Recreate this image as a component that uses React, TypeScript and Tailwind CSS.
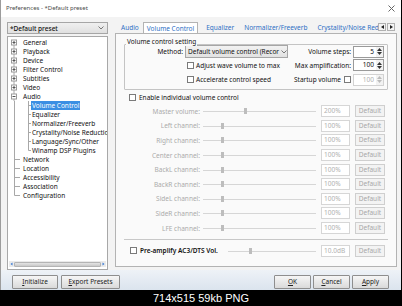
import React from "react";

const LINE = "#a8a8a8";

function ExpandBox({ open }: { open?: boolean }) {
  return (
    <g>
      <rect x="3.5" y="2" width="5" height="5" fill="#fff" stroke="#9a9a9a" strokeWidth="1" />
      <line x1="4.5" y1="4.5" x2="7.5" y2="4.5" stroke="#555" strokeWidth="1" />
      {!open && <line x1="6" y1="3" x2="6" y2="6" stroke="#555" strokeWidth="1" />}
    </g>
  );
}

type Row = { label: string; kind: "box" | "boxopen" | "leaf" | "child"; first?: boolean; last?: boolean; sel?: boolean };

const rows: Row[] = [
  { label: "General", kind: "box", first: true },
  { label: "Playback", kind: "box" },
  { label: "Device", kind: "box" },
  { label: "Filter Control", kind: "box" },
  { label: "Subtitles", kind: "box" },
  { label: "Video", kind: "box" },
  { label: "Audio", kind: "boxopen" },
  { label: "Volume Control", kind: "child", sel: true },
  { label: "Equalizer", kind: "child" },
  { label: "Normalizer/Freeverb", kind: "child" },
  { label: "Crystality/Noise Reduction", kind: "child" },
  { label: "Language/Sync/Other", kind: "child" },
  { label: "Winamp DSP Plugins", kind: "child", last: true },
  { label: "Network", kind: "leaf" },
  { label: "Location", kind: "leaf" },
  { label: "Accessibility", kind: "leaf" },
  { label: "Association", kind: "leaf" },
  { label: "Configuration", kind: "leaf", last: true },
];

function TreeRow({ r }: { r: Row }) {
  const isChild = r.kind === "child";
  const w = isChild ? 23 : 14;
  return (
    <div className="flex h-[9px] items-center whitespace-nowrap">
      <svg width={w} height="9" className="shrink-0">
        {r.kind === "box" || r.kind === "boxopen" ? (
          <>
            {!r.first && <line x1="6" y1="0" x2="6" y2="2" stroke={LINE} />}
            <line x1="6" y1="7" x2="6" y2="9" stroke={LINE} />
            <ExpandBox open={r.kind === "boxopen"} />
          </>
        ) : r.kind === "leaf" ? (
          <>
            <line x1="6.5" y1="0" x2="6.5" y2={r.last ? 4.5 : 9} stroke={LINE} />
            <line x1="6.5" y1="4.5" x2="12" y2="4.5" stroke={LINE} />
          </>
        ) : (
          <>
            <line x1="6.5" y1="0" x2="6.5" y2="9" stroke={LINE} />
            <line x1="20.5" y1="0" x2="20.5" y2={r.last ? 4.5 : 9} stroke={LINE} />
            <line x1="20.5" y1="4.5" x2="23" y2="4.5" stroke={LINE} />
          </>
        )}
      </svg>
      <span
        className={
          r.sel
            ? "bg-[#3b8fe3] text-white px-[1px] leading-[9px]"
            : "text-[#111] px-[1px] leading-[9px]"
        }
      >
        {r.label}
      </span>
    </div>
  );
}

function Check() {
  return <div className="w-[7px] h-[7px] bg-white border border-[#7a7a7a] shrink-0" />;
}

function Spin({ value, disabled }: { value: string; disabled?: boolean }) {
  return (
    <div
      className={
        "flex h-[12px] w-[31px] border bg-white " +
        (disabled ? "border-[#d2d2d2] text-[#b0b0b0]" : "border-[#9a9a9a] text-[#111]")
      }
    >
      <div className="flex-1 text-right pr-[2px] leading-[10px]">{value}</div>
      <div className="w-[7px] flex flex-col items-center justify-center gap-[1px] bg-[#f2f2f2]">
        <svg width="5" height="3"><polygon points="2.5,0 5,3 0,3" fill={disabled ? "#bbb" : "#333"} /></svg>
        <svg width="5" height="3"><polygon points="0,0 5,0 2.5,3" fill={disabled ? "#bbb" : "#333"} /></svg>
      </div>
    </div>
  );
}

function Slider({ width, pos }: { width: number; pos: number }) {
  return (
    <div className="relative h-[10px] shrink-0" style={{ width }}>
      <div className="absolute left-0 right-0 top-[5px] h-[1px] bg-[#d6d6d6]" />
      <div className="absolute top-[2px] w-[3px] h-[6px] bg-[#bdbdbd]" style={{ left: pos }} />
    </div>
  );
}

function ValueBox({ v }: { v: string }) {
  return (
    <div className="ml-[5px] w-[29px] h-[12px] border border-[#d6d6d6] bg-white text-[#b0b0b0] pl-[2px] leading-[10px] shrink-0">
      {v}
    </div>
  );
}

function DefBtn() {
  return (
    <div className="ml-[5px] w-[30px] h-[12px] border border-[#cfcfcf] bg-[#f3f3f3] text-[#a8a8a8] flex items-center justify-center leading-[10px] shrink-0">
      Default
    </div>
  );
}

const channels: [string, string, number][] = [
  ["Master volume:", "200%", 41],
  ["Left channel:", "100%", 18],
  ["Right channel:", "100%", 18],
  ["Center channel:", "100%", 18],
  ["BackL channel:", "100%", 18],
  ["BackR channel:", "100%", 18],
  ["SideL channel:", "100%", 18],
  ["SideR channel:", "100%", 18],
  ["LFE channel:", "100%", 18],
];

function Btn({ u, rest, w }: { u: string; rest: string; w: string }) {
  return (
    <div
      className={
        "h-[14px] border border-[#8e8e8e] rounded-[1px] bg-gradient-to-b from-[#f6f6f6] to-[#dadada] text-[#222] flex items-center justify-center leading-[12px] " +
        w
      }
    >
      <span>
        <span className="underline">{u}</span>
        {rest}
      </span>
    </div>
  );
}

export default function App() {
  return (
    <div className="w-[402px] h-[306px] bg-black flex flex-col font-['Noto_Sans',sans-serif] text-[6.5px] leading-[9px] overflow-hidden">
      <div className="w-[401px] h-[290px] flex flex-col bg-[#f3f3f3] border-l border-[#9c9c9c]">
        {/* title bar */}
        <div className="h-[17px] bg-white flex items-center justify-between pl-[5px] pr-[6px] text-[#4a4a4a] text-[6px]">
          <span>Preferences - *Default preset</span>
          <svg width="7" height="7">
            <line x1="0.5" y1="0.5" x2="6.5" y2="6.5" stroke="#666" />
            <line x1="6.5" y1="0.5" x2="0.5" y2="6.5" stroke="#666" />
          </svg>
        </div>

        {/* body */}
        <div className="flex-1 flex pt-[5px] pl-[6px]">
          {/* left column */}
          <div className="w-[101px] flex flex-col">
            <div className="h-[12px] border border-[#a6a6a6] bg-gradient-to-b from-[#f0f0f0] to-[#e0e0e0] flex items-center justify-between pl-[2px] pr-[3px] text-[#111] font-medium">
              <span>*Default preset</span>
              <svg width="6" height="4">
                <polyline points="0.5,0.5 3,3 5.5,0.5" fill="none" stroke="#777" />
              </svg>
            </div>
            <div className="mt-[2px] h-[234px] border border-[#a8a8a8] bg-white flex flex-col">
              <div className="flex-1 pt-[1px] overflow-hidden">
                {rows.map((r) => (
                  <TreeRow key={r.label} r={r} />
                ))}
              </div>
              <div className="h-[6px] mx-[1px] mb-[2px] flex items-center bg-[#eaeaea]">
                <svg width="5" height="6"><polygon points="3.5,1.5 3.5,4.5 1.5,3" fill="#3a7bd5" /></svg>
                <div className="flex-1 h-[5px] bg-gradient-to-b from-[#e4e4e4] to-[#c9c9c9] border border-[#b4b4b4] rounded-[1px]" />
                <svg width="5" height="6"><polygon points="1.5,1.5 1.5,4.5 3.5,3" fill="#3a7bd5" /></svg>
              </div>
            </div>
          </div>

          {/* right column */}
          <div className="ml-[7px] w-[282px] flex flex-col">
            {/* tabs */}
            <div className="h-[11px] flex items-end relative z-10">
              <div className="flex-1 flex items-end overflow-hidden whitespace-nowrap text-[#2e6fc4]">
                <div className="pl-[6px] pr-[4px] h-[10px] leading-[10px]">Audio</div>
                <div className="px-[3px] h-[12px] leading-[11px] bg-white border border-b-0 border-[#b3b3b3] mb-[-1px]">
                  Volume Control
                </div>
                <div className="px-[8px] h-[10px] leading-[10px]">Equalizer</div>
                <div className="px-[2px] h-[10px] leading-[10px]">Normalizer/Freeverb</div>
                <div className="px-[8px] h-[10px] leading-[10px]">Crystality/Noise Reduction</div>
              </div>
              <div className="flex gap-[1px] mb-[2px] mr-[2px]">
                <div className="w-[8px] h-[8px] border border-[#b0b0b0] bg-[#f4f4f4] flex items-center justify-center">
                  <svg width="3" height="4"><polygon points="3,0 3,4 0,2" fill="#222" /></svg>
                </div>
                <div className="w-[8px] h-[8px] border border-[#b0b0b0] bg-[#f4f4f4] flex items-center justify-center">
                  <svg width="3" height="4"><polygon points="0,0 0,4 3,2" fill="#222" /></svg>
                </div>
              </div>
            </div>

            {/* pane */}
            <div className="h-[234px] border border-[#b3b3b3] bg-[#fafafa] px-[8px] flex flex-col">
              <div className="mt-[3px] flex flex-col">
                <div className="relative z-10 pl-[2px] h-[9px] leading-[9px]">
                  <span className="bg-[#fafafa] px-[1px] text-[#111]">Volume control setting</span>
                </div>
                <div className="-mt-[2px] border border-[#c4c4c4] rounded-[1px] px-[1px] pb-[2px] flex">
                  <div className="w-[162px] grid grid-cols-[57px_103px] gap-x-[2px]">
                    <div className="h-[13px] flex items-center justify-end text-[#111]">Method:</div>
                    <div className="h-[13px] border border-[#a6a6a6] bg-gradient-to-b from-[#f2f2f2] to-[#e2e2e2] flex items-center justify-between pl-[2px] pr-[3px] overflow-hidden whitespace-nowrap">
                      <span className="text-[#111]">Default volume control (Recor</span>
                      <svg width="6" height="4" className="shrink-0 ml-[2px]">
                        <polyline points="0.5,0.5 3,3 5.5,0.5" fill="none" stroke="#777" />
                      </svg>
                    </div>
                    <div />
                    <div className="h-[14px] flex items-center gap-[2px] pl-[2px] text-[#111]">
                      <Check />
                      <span>Adjust wave volume to max</span>
                    </div>
                    <div />
                    <div className="h-[15px] flex items-center gap-[2px] pl-[2px] text-[#111]">
                      <Check />
                      <span>Accelerate control speed</span>
                    </div>
                  </div>
                  <div className="flex-1 grid grid-cols-[1fr_31px] gap-x-[2px] pr-[2px] text-[#111]">
                    <div className="h-[13px] flex items-center justify-end">Volume steps:</div>
                    <div className="h-[13px] flex items-center"><Spin value="5" /></div>
                    <div className="h-[14px] flex items-center justify-end">Max amplification:</div>
                    <div className="h-[14px] flex items-center"><Spin value="100" /></div>
                    <div className="h-[15px] flex items-center justify-end gap-[3px]">
                      <span>Startup volume</span>
                      <Check />
                    </div>
                    <div className="h-[15px] flex items-center"><Spin value="100" disabled /></div>
                  </div>
                </div>
              </div>

              <div className="h-[14px] flex items-center gap-[3px] pl-[5px] text-[#111]">
                <Check />
                <span>Enable individual volume control</span>
              </div>

              {channels.map(([l, v, p]) => (
                <div key={l} className="h-[14.6px] flex items-center">
                  <div className="w-[76px] text-right text-[#ababab] shrink-0">{l}</div>
                  <div className="ml-[3px]"><Slider width={113} pos={p} /></div>
                  <ValueBox v={v} />
                  <DefBtn />
                </div>
              ))}

              <div className="mt-[4px] border-t border-[#c8c8c8]" />

              <div className="mt-[4px] h-[13px] flex items-center">
                <div className="w-[104px] flex items-center gap-[3px] pl-[6px] text-[#111] font-semibold shrink-0 whitespace-nowrap">
                  <Check />
                  <span>Pre-amplify AC3/DTS Vol.</span>
                </div>
                <Slider width={88} pos={21} />
                <ValueBox v="10.0dB" />
                <DefBtn />
              </div>
            </div>
          </div>
        </div>

        {/* bottom strip */}
        <div className="h-[20px] flex items-start pt-[5px] px-[11px] bg-gradient-to-b from-[#eef2f7] to-[#dbe4ee]">
          <Btn u="I" rest="nitialize" w="w-[46px]" />
          <div className="w-[3px]" />
          <Btn u="E" rest="xport Presets" w="w-[59px]" />
          <div className="flex-1" />
          <Btn u="O" rest="K" w="w-[37px]" />
          <div className="w-[2px]" />
          <Btn u="C" rest="ancel" w="w-[37px]" />
          <div className="w-[2px]" />
          <Btn u="A" rest="pply" w="w-[37px]" />
          <div className="w-[1px]" />
        </div>
      </div>
      <div className="h-[16px] flex items-center justify-center text-white text-[11px] font-['Liberation_Sans',sans-serif] leading-[16px]">
        714x515 59kb PNG
      </div>
    </div>
  );
}
